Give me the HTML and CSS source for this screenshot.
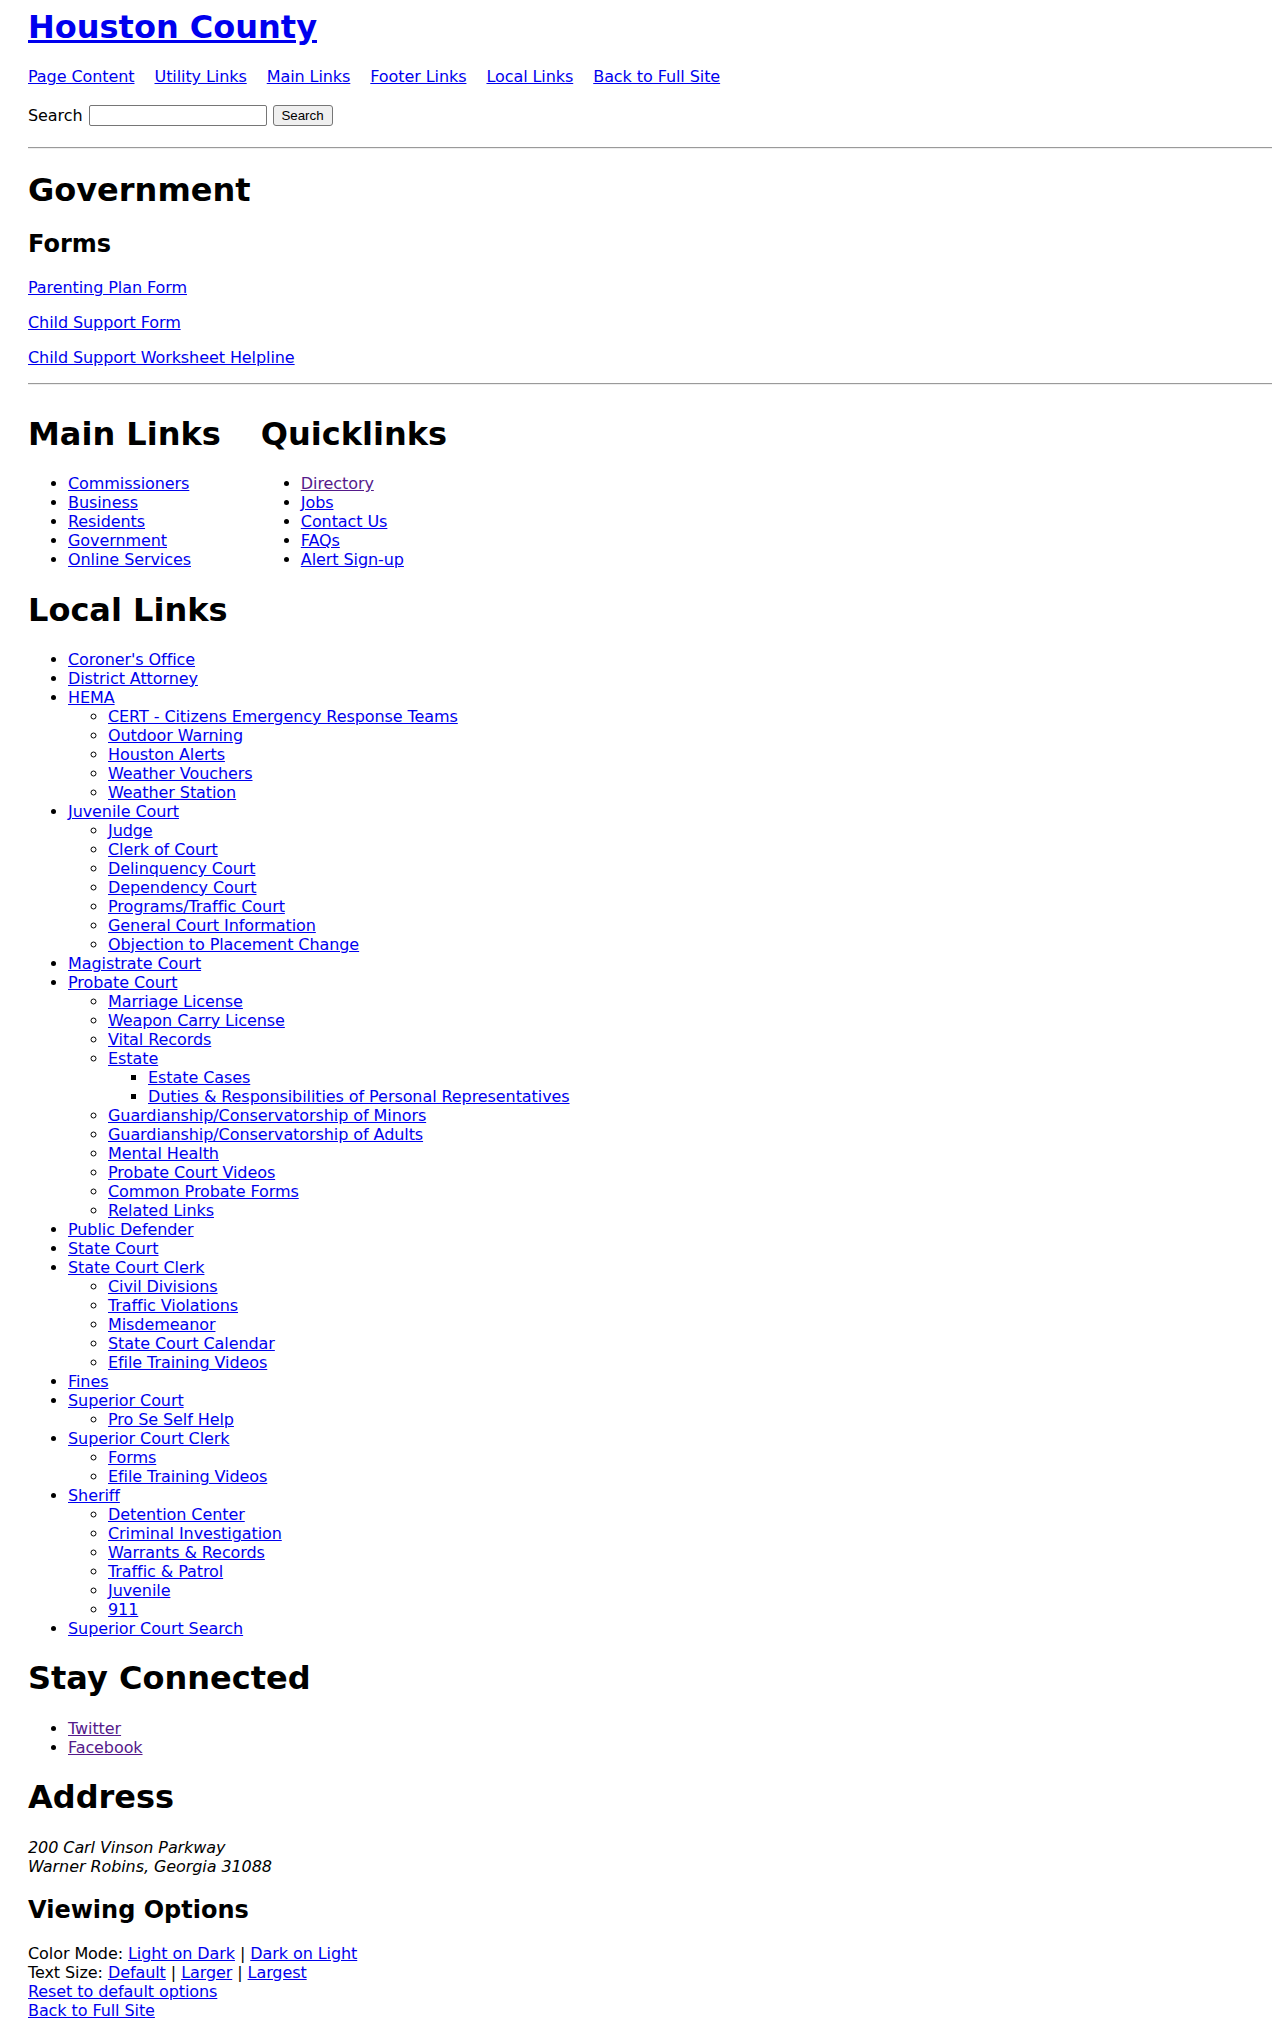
FILE: index.html
```html
<!DOCTYPE html>
<html lang="en">
<head>
<meta charset="utf-8">
<title>Houston County</title>
<link rel="stylesheet" href="styles.css">
</head>
<body>
<div class="page">
  <h1 class="site-title"><a href="#">Houston County</a></h1>
  <nav class="skip-nav">
    <a href="#">Page Content</a>
    <a href="#">Utility Links</a>
    <a href="#">Main Links</a>
    <a href="#">Footer Links</a>
    <a href="#">Local Links</a>
    <a href="#">Back to Full Site</a>
  </nav>
  <form class="search">
    <label class="search-label" for="q">Search</label>
    <input class="search-input" id="q" type="text">
    <button class="search-button" type="button">Search</button>
  </form>
  <hr class="rule">
  <h1 class="section-title">Government</h1>
  <h2 class="sub-title">Forms</h2>
  <p class="form-link"><a href="#">Parenting Plan Form</a></p>
  <p class="form-link"><a href="#">Child Support Form</a></p>
  <p class="form-link"><a href="#">Child Support Worksheet Helpline</a></p>
  <hr class="rule rule-bottom">
  <div class="columns">
    <div class="col">
      <h1 class="section-title">Main Links</h1>
      <ul class="link-list">
        <li><a href="#">Commissioners</a></li>
        <li><a href="#">Business</a></li>
        <li><a href="#">Residents</a></li>
        <li><a href="#">Government</a></li>
        <li><a href="#">Online Services</a></li>
      </ul>
    </div>
    <div class="col">
      <h1 class="section-title">Quicklinks</h1>
      <ul class="link-list">
        <li><a class="visited" href="#">Directory</a></li>
        <li><a href="#">Jobs</a></li>
        <li><a href="#">Contact Us</a></li>
        <li><a href="#">FAQs</a></li>
        <li><a href="#">Alert Sign-up</a></li>
      </ul>
    </div>
  </div>
  <h1 class="section-title">Local Links</h1>
  <ul class="link-list">
    <li><a href="#">Coroner's Office</a></li>
    <li><a href="#">District Attorney</a></li>
    <li><a href="#">HEMA</a>
      <ul>
        <li><a href="#">CERT - Citizens Emergency Response Teams</a></li>
        <li><a href="#">Outdoor Warning</a></li>
        <li><a href="#">Houston Alerts</a></li>
        <li><a href="#">Weather Vouchers</a></li>
        <li><a href="#">Weather Station</a></li>
      </ul>
    </li>
    <li><a href="#">Juvenile Court</a>
      <ul>
        <li><a href="#">Judge</a></li>
        <li><a href="#">Clerk of Court</a></li>
        <li><a href="#">Delinquency Court</a></li>
        <li><a href="#">Dependency Court</a></li>
        <li><a href="#">Programs/Traffic Court</a></li>
        <li><a href="#">General Court Information</a></li>
        <li><a href="#">Objection to Placement Change</a></li>
      </ul>
    </li>
    <li><a href="#">Magistrate Court</a></li>
    <li><a href="#">Probate Court</a>
      <ul>
        <li><a href="#">Marriage License</a></li>
        <li><a href="#">Weapon Carry License</a></li>
        <li><a href="#">Vital Records</a></li>
        <li><a href="#">Estate</a>
          <ul>
            <li><a href="#">Estate Cases</a></li>
            <li><a href="#">Duties &amp; Responsibilities of Personal Representatives</a></li>
          </ul>
        </li>
        <li><a href="#">Guardianship/Conservatorship of Minors</a></li>
        <li><a href="#">Guardianship/Conservatorship of Adults</a></li>
        <li><a href="#">Mental Health</a></li>
        <li><a href="#">Probate Court Videos</a></li>
        <li><a href="#">Common Probate Forms</a></li>
        <li><a href="#">Related Links</a></li>
      </ul>
    </li>
    <li><a href="#">Public Defender</a></li>
    <li><a href="#">State Court</a></li>
    <li><a href="#">State Court Clerk</a>
      <ul>
        <li><a href="#">Civil Divisions</a></li>
        <li><a href="#">Traffic Violations</a></li>
        <li><a href="#">Misdemeanor</a></li>
        <li><a href="#">State Court Calendar</a></li>
        <li><a href="#">Efile Training Videos</a></li>
      </ul>
    </li>
    <li><a href="#">Fines</a></li>
    <li><a href="#">Superior Court</a>
      <ul>
        <li><a href="#">Pro Se Self Help</a></li>
      </ul>
    </li>
    <li><a href="#">Superior Court Clerk</a>
      <ul>
        <li><a href="#">Forms</a></li>
        <li><a href="#">Efile Training Videos</a></li>
      </ul>
    </li>
    <li><a href="#">Sheriff</a>
      <ul>
        <li><a href="#">Detention Center</a></li>
        <li><a href="#">Criminal Investigation</a></li>
        <li><a href="#">Warrants &amp; Records</a></li>
        <li><a href="#">Traffic &amp; Patrol</a></li>
        <li><a href="#">Juvenile</a></li>
        <li><a href="#">911</a></li>
      </ul>
    </li>
    <li><a href="#">Superior Court Search</a></li>
  </ul>
  <h1 class="section-title">Stay Connected</h1>
  <ul class="link-list">
    <li><a class="visited" href="#">Twitter</a></li>
    <li><a class="visited" href="#">Facebook</a></li>
  </ul>
  <h1 class="section-title">Address</h1>
  <address class="address">200 Carl Vinson Parkway<br>Warner Robins, Georgia 31088</address>
  <h2 class="sub-title">Viewing Options</h2>
  <div class="options">
    <div>Color Mode: <a href="#">Light on Dark</a> | <a href="#">Dark on Light</a></div>
    <div>Text Size: <a href="#">Default</a> | <a href="#">Larger</a> | <a href="#">Largest</a></div>
    <div><a href="#">Reset to default options</a></div>
    <div><a href="#">Back to Full Site</a></div>
  </div>
</div>
</body>
</html>
```

FILE: styles.css
```css
html, body {
  background: #ffffff;
}

body {
  margin: 8px;
  font-family: "DejaVu Sans", sans-serif;
  font-size: 16px;
  letter-spacing: -0.08px;
  color: #000000;
}

.page {
  padding-left: 20px;
}

a {
  color: #0000ee;
  text-decoration: underline;
}

a.visited {
  color: #551a8b;
}

.site-title {
  margin: 0 0 21.44px;
  font-size: 32px;
  font-weight: bold;
  letter-spacing: normal;
}

.skip-nav {
  display: flex;
  flex-wrap: wrap;
  gap: 20px;
  margin: 16px 0;
}

.search {
  display: flex;
  align-items: center;
  margin: 0;
  height: 26px;
}

.search-label {
  margin-right: 6px;
}

.search-input {
  box-sizing: border-box;
  width: 178px;
  height: 21px;
  margin: 0 6px 0 0;
  padding: 1px 2px;
  border: 1px solid #767676;
  border-radius: 2px;
  background: #ffffff;
  font-family: "Liberation Sans", sans-serif;
  font-size: 13.33px;
  letter-spacing: normal;
}

.search-button {
  box-sizing: border-box;
  width: 60px;
  height: 21px;
  margin: 0;
  padding: 1px 6px;
  border: 1px solid #767676;
  border-radius: 3px;
  background: #efefef;
  color: #000000;
  font-family: "Liberation Sans", sans-serif;
  font-size: 13.33px;
  letter-spacing: normal;
}

.rule {
  margin: 19px 0 8px;
  height: 0;
  border: 0;
  border-top: 1px solid #9a9a9a;
  border-bottom: 1px solid #eeeeee;
}

.rule-bottom {
  margin-top: 16px;
}

.section-title {
  margin: 21.44px 0;
  font-size: 32px;
  font-weight: bold;
  letter-spacing: normal;
}

.sub-title {
  margin: 19.92px 0;
  font-size: 24px;
  font-weight: bold;
  letter-spacing: normal;
}

.form-link {
  margin: 16px 0;
}

.columns {
  display: flex;
  gap: 40px;
  align-items: flex-start;
  margin-top: 8px;
}

.columns .section-title {
  margin-top: 21.44px;
}

.columns .link-list {
  margin-bottom: 0;
}

.link-list {
  margin: 16px 0;
  padding-left: 40px;
}

.link-list ul {
  margin: 0;
  padding-left: 40px;
  list-style-type: circle;
}

.link-list ul ul {
  list-style-type: square;
}

.address {
  font-style: italic;
  margin: 0;
}

.options {
  margin: 0;
}
```
